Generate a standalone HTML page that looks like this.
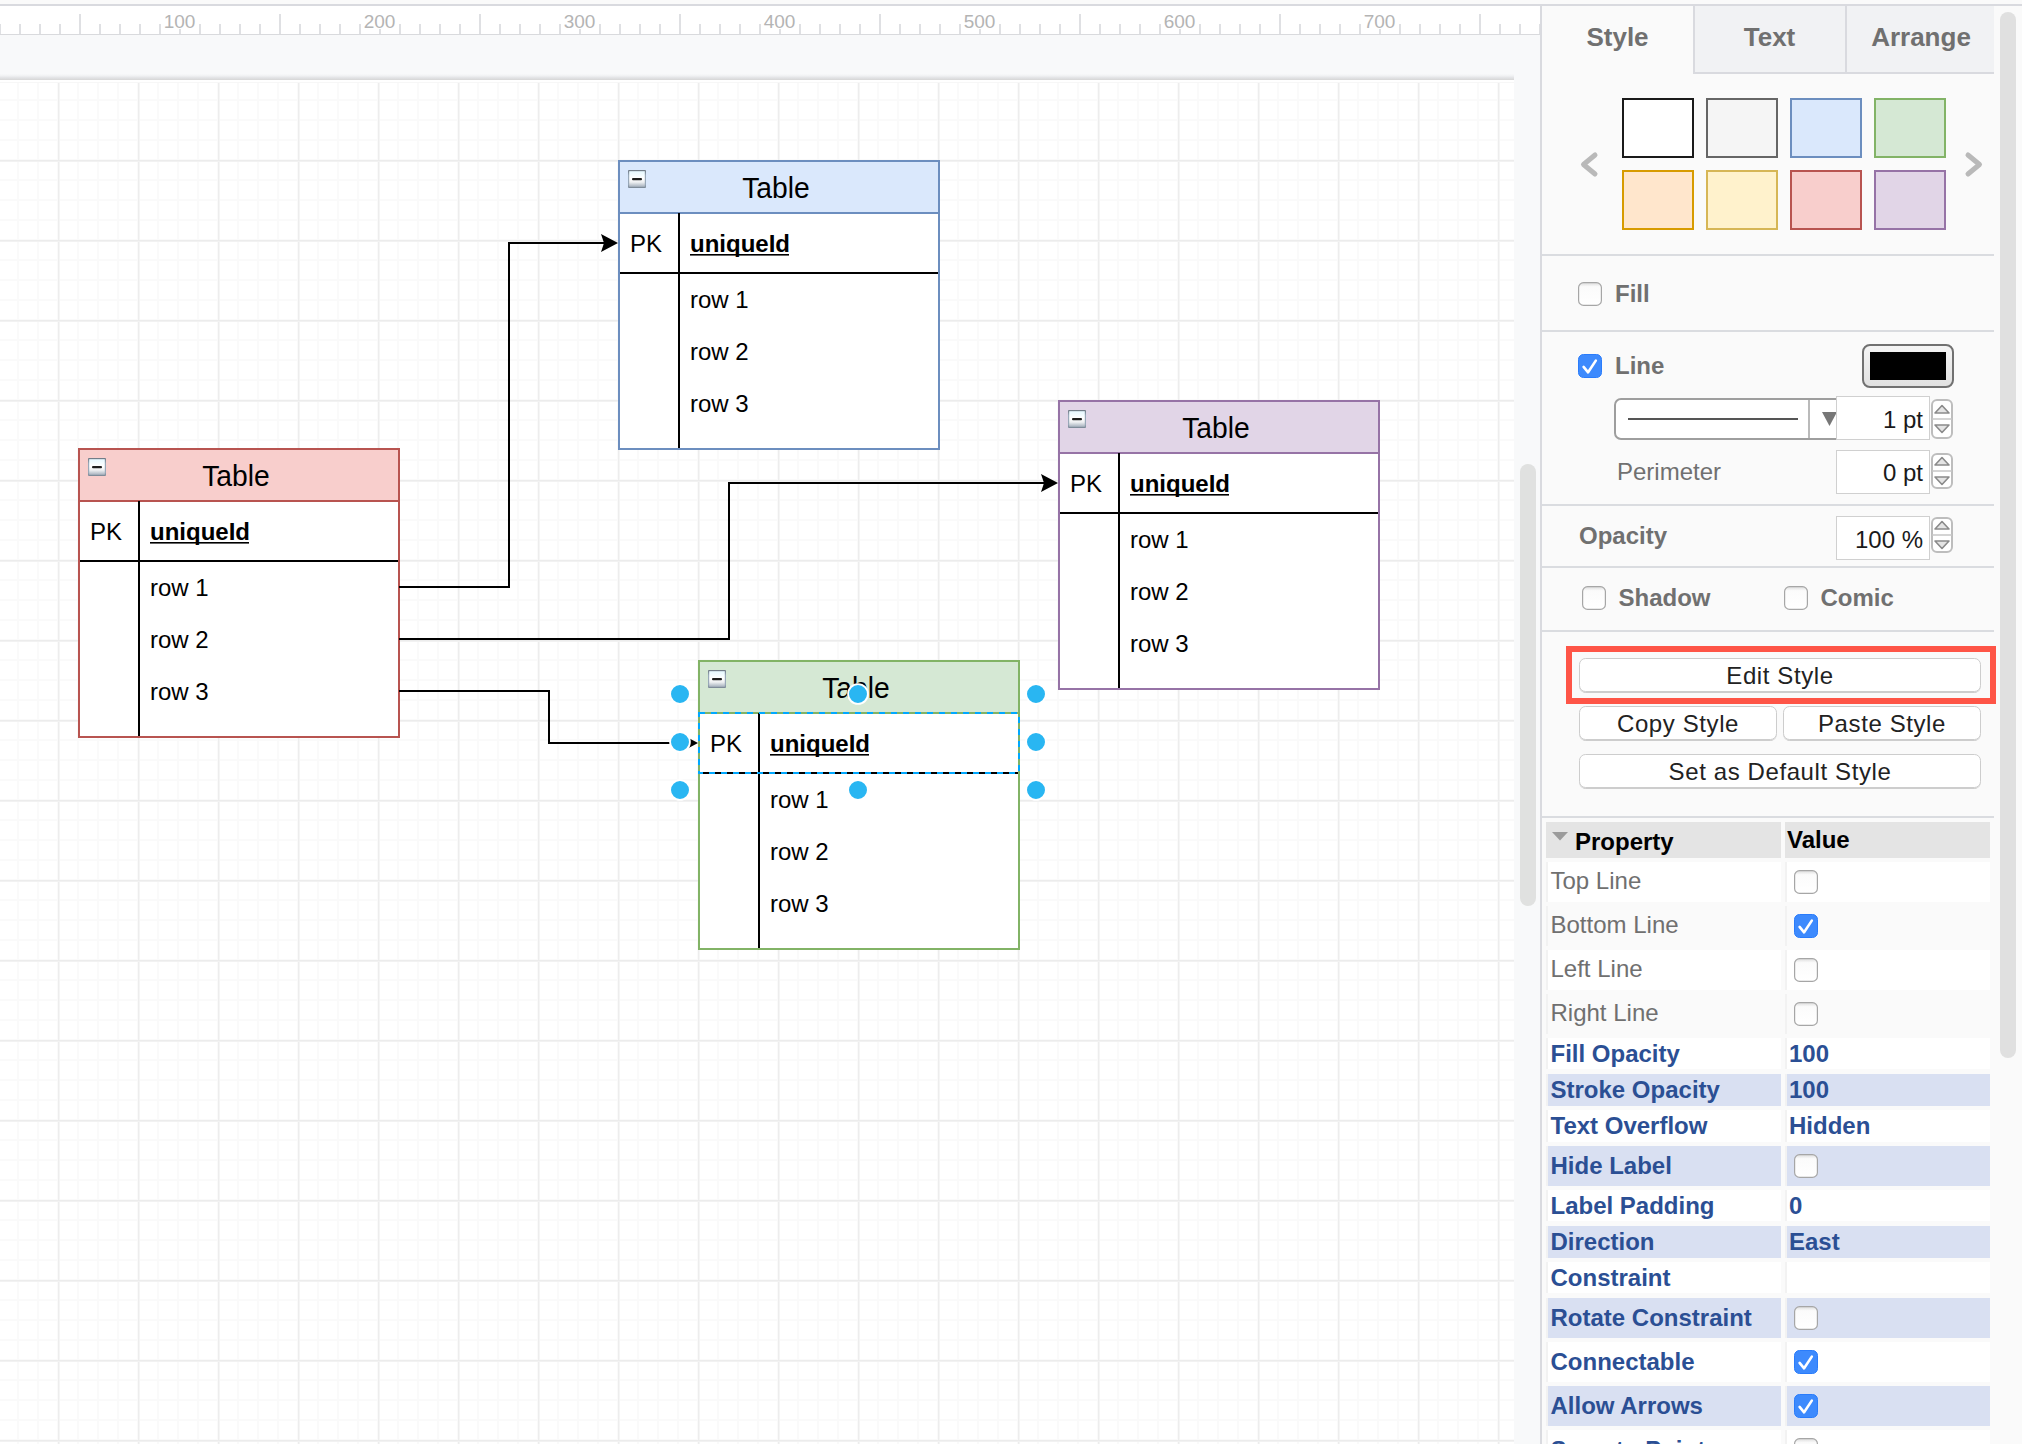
<!DOCTYPE html>
<html><head><meta charset="utf-8"><title>draw.io</title>
<style>
html,body{margin:0;padding:0;width:2022px;height:1444px;overflow:hidden;background:#fafafa;}
svg{display:block;font-family:"Liberation Sans",sans-serif;}
</style></head><body>
<svg width="2022" height="1444" viewBox="0 0 2022 1444">
<rect x="0" y="0" width="2022" height="6" fill="#fafafa"/>
<defs><pattern id="gmin" x="17" y="79" width="20" height="20" patternUnits="userSpaceOnUse"><rect x="0" y="0" width="2" height="20" fill="#fafafa"/><rect x="0" y="0" width="20" height="2" fill="#fafafa"/></pattern><pattern id="gmaj" x="58" y="80" width="80" height="80" patternUnits="userSpaceOnUse"><rect x="0" y="0" width="1" height="80" fill="#ededed"/><rect x="1" y="0" width="1" height="80" fill="#f5f5f5"/><rect x="0" y="0" width="80" height="1" fill="#ececec"/><rect x="0" y="1" width="80" height="1" fill="#f2f2f2"/></pattern><linearGradient id="shd" x1="0" y1="0" x2="0" y2="1"><stop offset="0" stop-color="#f8f9fa" stop-opacity="0"/><stop offset="0.6" stop-color="#e6e7e9"/><stop offset="1" stop-color="#d6d6d6"/></linearGradient></defs>
<rect x="0" y="35" width="1540" height="1409" fill="#f8f9fa"/>
<rect x="0" y="80" width="1514" height="1364" fill="#ffffff"/>
<rect x="0" y="80" width="1514" height="1364" fill="url(#gmin)"/>
<rect x="0" y="80" width="1514" height="1364" fill="url(#gmaj)"/>
<rect x="0" y="80" width="1514" height="2" fill="#ffffff"/>
<rect x="0" y="82" width="1514" height="1" fill="#f7f7f7"/>
<rect x="0" y="73" width="1514" height="7" fill="url(#shd)"/>
<rect x="1520" y="464" width="16" height="442" rx="8" fill="#e0e1e0"/>
<rect x="0" y="6" width="1540" height="28" fill="#ffffff"/>
<rect x="0" y="34" width="1540" height="1" fill="#d9dadd"/>
<rect x="-1" y="24" width="2" height="10" fill="#dfe0e3"/>
<rect x="19" y="24" width="2" height="10" fill="#dfe0e3"/>
<rect x="39" y="24" width="2" height="10" fill="#dfe0e3"/>
<rect x="59" y="24" width="2" height="10" fill="#dfe0e3"/>
<rect x="79" y="14" width="2" height="20" fill="#dfe0e3"/>
<rect x="99" y="24" width="2" height="10" fill="#dfe0e3"/>
<rect x="119" y="24" width="2" height="10" fill="#dfe0e3"/>
<rect x="139" y="24" width="2" height="10" fill="#dfe0e3"/>
<rect x="159" y="24" width="2" height="10" fill="#dfe0e3"/>
<rect x="179" y="29" width="2" height="5" fill="#dfe0e3"/>
<rect x="199" y="24" width="2" height="10" fill="#dfe0e3"/>
<rect x="219" y="24" width="2" height="10" fill="#dfe0e3"/>
<rect x="239" y="24" width="2" height="10" fill="#dfe0e3"/>
<rect x="259" y="24" width="2" height="10" fill="#dfe0e3"/>
<rect x="279" y="14" width="2" height="20" fill="#dfe0e3"/>
<rect x="299" y="24" width="2" height="10" fill="#dfe0e3"/>
<rect x="319" y="24" width="2" height="10" fill="#dfe0e3"/>
<rect x="339" y="24" width="2" height="10" fill="#dfe0e3"/>
<rect x="359" y="24" width="2" height="10" fill="#dfe0e3"/>
<rect x="379" y="29" width="2" height="5" fill="#dfe0e3"/>
<rect x="399" y="24" width="2" height="10" fill="#dfe0e3"/>
<rect x="419" y="24" width="2" height="10" fill="#dfe0e3"/>
<rect x="439" y="24" width="2" height="10" fill="#dfe0e3"/>
<rect x="459" y="24" width="2" height="10" fill="#dfe0e3"/>
<rect x="479" y="14" width="2" height="20" fill="#dfe0e3"/>
<rect x="499" y="24" width="2" height="10" fill="#dfe0e3"/>
<rect x="519" y="24" width="2" height="10" fill="#dfe0e3"/>
<rect x="539" y="24" width="2" height="10" fill="#dfe0e3"/>
<rect x="559" y="24" width="2" height="10" fill="#dfe0e3"/>
<rect x="579" y="29" width="2" height="5" fill="#dfe0e3"/>
<rect x="599" y="24" width="2" height="10" fill="#dfe0e3"/>
<rect x="619" y="24" width="2" height="10" fill="#dfe0e3"/>
<rect x="639" y="24" width="2" height="10" fill="#dfe0e3"/>
<rect x="659" y="24" width="2" height="10" fill="#dfe0e3"/>
<rect x="679" y="14" width="2" height="20" fill="#dfe0e3"/>
<rect x="699" y="24" width="2" height="10" fill="#dfe0e3"/>
<rect x="719" y="24" width="2" height="10" fill="#dfe0e3"/>
<rect x="739" y="24" width="2" height="10" fill="#dfe0e3"/>
<rect x="759" y="24" width="2" height="10" fill="#dfe0e3"/>
<rect x="779" y="29" width="2" height="5" fill="#dfe0e3"/>
<rect x="799" y="24" width="2" height="10" fill="#dfe0e3"/>
<rect x="819" y="24" width="2" height="10" fill="#dfe0e3"/>
<rect x="839" y="24" width="2" height="10" fill="#dfe0e3"/>
<rect x="859" y="24" width="2" height="10" fill="#dfe0e3"/>
<rect x="879" y="14" width="2" height="20" fill="#dfe0e3"/>
<rect x="899" y="24" width="2" height="10" fill="#dfe0e3"/>
<rect x="919" y="24" width="2" height="10" fill="#dfe0e3"/>
<rect x="939" y="24" width="2" height="10" fill="#dfe0e3"/>
<rect x="959" y="24" width="2" height="10" fill="#dfe0e3"/>
<rect x="979" y="29" width="2" height="5" fill="#dfe0e3"/>
<rect x="999" y="24" width="2" height="10" fill="#dfe0e3"/>
<rect x="1019" y="24" width="2" height="10" fill="#dfe0e3"/>
<rect x="1039" y="24" width="2" height="10" fill="#dfe0e3"/>
<rect x="1059" y="24" width="2" height="10" fill="#dfe0e3"/>
<rect x="1079" y="14" width="2" height="20" fill="#dfe0e3"/>
<rect x="1099" y="24" width="2" height="10" fill="#dfe0e3"/>
<rect x="1119" y="24" width="2" height="10" fill="#dfe0e3"/>
<rect x="1139" y="24" width="2" height="10" fill="#dfe0e3"/>
<rect x="1159" y="24" width="2" height="10" fill="#dfe0e3"/>
<rect x="1179" y="29" width="2" height="5" fill="#dfe0e3"/>
<rect x="1199" y="24" width="2" height="10" fill="#dfe0e3"/>
<rect x="1219" y="24" width="2" height="10" fill="#dfe0e3"/>
<rect x="1239" y="24" width="2" height="10" fill="#dfe0e3"/>
<rect x="1259" y="24" width="2" height="10" fill="#dfe0e3"/>
<rect x="1279" y="14" width="2" height="20" fill="#dfe0e3"/>
<rect x="1299" y="24" width="2" height="10" fill="#dfe0e3"/>
<rect x="1319" y="24" width="2" height="10" fill="#dfe0e3"/>
<rect x="1339" y="24" width="2" height="10" fill="#dfe0e3"/>
<rect x="1359" y="24" width="2" height="10" fill="#dfe0e3"/>
<rect x="1379" y="29" width="2" height="5" fill="#dfe0e3"/>
<rect x="1399" y="24" width="2" height="10" fill="#dfe0e3"/>
<rect x="1419" y="24" width="2" height="10" fill="#dfe0e3"/>
<rect x="1439" y="24" width="2" height="10" fill="#dfe0e3"/>
<rect x="1459" y="24" width="2" height="10" fill="#dfe0e3"/>
<rect x="1479" y="14" width="2" height="20" fill="#dfe0e3"/>
<rect x="1499" y="24" width="2" height="10" fill="#dfe0e3"/>
<rect x="1519" y="24" width="2" height="10" fill="#dfe0e3"/>
<rect x="1539" y="24" width="2" height="10" fill="#dfe0e3"/>
<text x="179.5" y="27.8" text-anchor="middle" font-size="19" fill="#b4b4b4">100</text>
<text x="379.5" y="27.8" text-anchor="middle" font-size="19" fill="#b4b4b4">200</text>
<text x="579.5" y="27.8" text-anchor="middle" font-size="19" fill="#b4b4b4">300</text>
<text x="779.5" y="27.8" text-anchor="middle" font-size="19" fill="#b4b4b4">400</text>
<text x="979.5" y="27.8" text-anchor="middle" font-size="19" fill="#b4b4b4">500</text>
<text x="1179.5" y="27.8" text-anchor="middle" font-size="19" fill="#b4b4b4">600</text>
<text x="1379.5" y="27.8" text-anchor="middle" font-size="19" fill="#b4b4b4">700</text>
<defs><linearGradient id="mig" x1="0" y1="0" x2="0" y2="1"><stop offset="0" stop-color="#e6f8ff"/><stop offset="0.45" stop-color="#ffffff"/><stop offset="0.7" stop-color="#eef0f2"/><stop offset="1" stop-color="#a7b2be"/></linearGradient><linearGradient id="mib" x1="0" y1="0" x2="0" y2="1"><stop offset="0" stop-color="#6e7883"/><stop offset="0.3" stop-color="#98a8b8"/><stop offset="0.8" stop-color="#98a8b8"/><stop offset="1" stop-color="#7a8794"/></linearGradient></defs>
<rect x="619" y="161" width="320" height="288" fill="#ffffff"/>
<rect x="619" y="161" width="320" height="52" fill="#dae8fc"/>
<rect x="619" y="213" width="320" height="0" fill="none"/>
<line x1="619" y1="213" x2="939" y2="213" stroke="#6c8ebf" stroke-width="2"/>
<line x1="619" y1="273" x2="939" y2="273" stroke="#000" stroke-width="2"/>
<line x1="679" y1="213" x2="679" y2="449" stroke="#000" stroke-width="2"/>
<rect x="619" y="161" width="320" height="288" fill="none" stroke="#6c8ebf" stroke-width="2"/>
<g transform="translate(628,170)"><rect x="0" y="0" width="18" height="18" rx="1" fill="url(#mib)"/><rect x="1.2" y="1.2" width="15.6" height="15.6" fill="url(#mig)"/><rect x="4" y="8" width="10" height="2.2" rx="1" fill="#1e1e1e"/></g>
<text x="776" y="198" text-anchor="middle" font-size="29" textLength="67.5" lengthAdjust="spacingAndGlyphs">Table</text>
<text x="630" y="252" font-size="24">PK</text>
<text x="690" y="252" font-size="24" font-weight="bold">uniqueId</text>
<rect x="690" y="254" width="99" height="1.6" fill="#000"/>
<text x="690" y="308" font-size="24">row 1</text>
<text x="690" y="360" font-size="24">row 2</text>
<text x="690" y="412" font-size="24">row 3</text>
<rect x="79" y="449" width="320" height="288" fill="#ffffff"/>
<rect x="79" y="449" width="320" height="52" fill="#f8cecc"/>
<rect x="79" y="501" width="320" height="0" fill="none"/>
<line x1="79" y1="501" x2="399" y2="501" stroke="#b85450" stroke-width="2"/>
<line x1="79" y1="561" x2="399" y2="561" stroke="#000" stroke-width="2"/>
<line x1="139" y1="501" x2="139" y2="737" stroke="#000" stroke-width="2"/>
<rect x="79" y="449" width="320" height="288" fill="none" stroke="#b85450" stroke-width="2"/>
<g transform="translate(88,458)"><rect x="0" y="0" width="18" height="18" rx="1" fill="url(#mib)"/><rect x="1.2" y="1.2" width="15.6" height="15.6" fill="url(#mig)"/><rect x="4" y="8" width="10" height="2.2" rx="1" fill="#1e1e1e"/></g>
<text x="236" y="486" text-anchor="middle" font-size="29" textLength="67.5" lengthAdjust="spacingAndGlyphs">Table</text>
<text x="90" y="540" font-size="24">PK</text>
<text x="150" y="540" font-size="24" font-weight="bold">uniqueId</text>
<rect x="150" y="542" width="99" height="1.6" fill="#000"/>
<text x="150" y="596" font-size="24">row 1</text>
<text x="150" y="648" font-size="24">row 2</text>
<text x="150" y="700" font-size="24">row 3</text>
<rect x="1059" y="401" width="320" height="288" fill="#ffffff"/>
<rect x="1059" y="401" width="320" height="52" fill="#e1d5e7"/>
<rect x="1059" y="453" width="320" height="0" fill="none"/>
<line x1="1059" y1="453" x2="1379" y2="453" stroke="#9673a6" stroke-width="2"/>
<line x1="1059" y1="513" x2="1379" y2="513" stroke="#000" stroke-width="2"/>
<line x1="1119" y1="453" x2="1119" y2="689" stroke="#000" stroke-width="2"/>
<rect x="1059" y="401" width="320" height="288" fill="none" stroke="#9673a6" stroke-width="2"/>
<g transform="translate(1068,410)"><rect x="0" y="0" width="18" height="18" rx="1" fill="url(#mib)"/><rect x="1.2" y="1.2" width="15.6" height="15.6" fill="url(#mig)"/><rect x="4" y="8" width="10" height="2.2" rx="1" fill="#1e1e1e"/></g>
<text x="1216" y="438" text-anchor="middle" font-size="29" textLength="67.5" lengthAdjust="spacingAndGlyphs">Table</text>
<text x="1070" y="492" font-size="24">PK</text>
<text x="1130" y="492" font-size="24" font-weight="bold">uniqueId</text>
<rect x="1130" y="494" width="99" height="1.6" fill="#000"/>
<text x="1130" y="548" font-size="24">row 1</text>
<text x="1130" y="600" font-size="24">row 2</text>
<text x="1130" y="652" font-size="24">row 3</text>
<rect x="699" y="661" width="320" height="288" fill="#ffffff"/>
<rect x="699" y="661" width="320" height="52" fill="#d5e8d4"/>
<rect x="699" y="713" width="320" height="0" fill="none"/>
<line x1="699" y1="713" x2="1019" y2="713" stroke="#82b366" stroke-width="2"/>
<line x1="699" y1="773" x2="1019" y2="773" stroke="#000" stroke-width="2"/>
<line x1="759" y1="713" x2="759" y2="949" stroke="#000" stroke-width="2"/>
<rect x="699" y="661" width="320" height="288" fill="none" stroke="#82b366" stroke-width="2"/>
<g transform="translate(708,670)"><rect x="0" y="0" width="18" height="18" rx="1" fill="url(#mib)"/><rect x="1.2" y="1.2" width="15.6" height="15.6" fill="url(#mig)"/><rect x="4" y="8" width="10" height="2.2" rx="1" fill="#1e1e1e"/></g>
<text x="856" y="698" text-anchor="middle" font-size="29" textLength="67.5" lengthAdjust="spacingAndGlyphs">Table</text>
<text x="710" y="752" font-size="24">PK</text>
<text x="770" y="752" font-size="24" font-weight="bold">uniqueId</text>
<rect x="770" y="754" width="99" height="1.6" fill="#000"/>
<text x="770" y="808" font-size="24">row 1</text>
<text x="770" y="860" font-size="24">row 2</text>
<text x="770" y="912" font-size="24">row 3</text>
<path d="M399,587 H509 V243 H606" fill="none" stroke="#000" stroke-width="2"/>
<path d="M618,243 L601,234 L604,243 L601,252 Z" fill="#000"/>
<path d="M399,639 H729 V483 H1046" fill="none" stroke="#000" stroke-width="2"/>
<path d="M1058,483 L1041,474 L1044,483 L1041,492 Z" fill="#000"/>
<path d="M399,691 H549 V743 H686" fill="none" stroke="#000" stroke-width="2"/>
<path d="M698,743 L681,734 L684,743 L681,752 Z" fill="#000"/>
<rect x="699" y="713" width="320" height="60" fill="none" stroke="#00a8ff" stroke-width="2" stroke-dasharray="6 6"/>
<circle cx="680" cy="694" r="9.9" fill="#29b6f2" stroke="#ffffff" stroke-width="1.8"/>
<circle cx="858" cy="694" r="9.9" fill="#29b6f2" stroke="#ffffff" stroke-width="1.8"/>
<circle cx="1036" cy="694" r="9.9" fill="#29b6f2" stroke="#ffffff" stroke-width="1.8"/>
<circle cx="680" cy="742" r="9.9" fill="#29b6f2" stroke="#ffffff" stroke-width="1.8"/>
<circle cx="1036" cy="742" r="9.9" fill="#29b6f2" stroke="#ffffff" stroke-width="1.8"/>
<circle cx="680" cy="790" r="9.9" fill="#29b6f2" stroke="#ffffff" stroke-width="1.8"/>
<circle cx="858" cy="790" r="9.9" fill="#29b6f2" stroke="#ffffff" stroke-width="1.8"/>
<circle cx="1036" cy="790" r="9.9" fill="#29b6f2" stroke="#ffffff" stroke-width="1.8"/>
<defs><linearGradient id="cbg" x1="0" y1="0" x2="0" y2="1"><stop offset="0" stop-color="#dcdcdc"/><stop offset="0.18" stop-color="#fbfbfb"/><stop offset="1" stop-color="#ffffff"/></linearGradient><linearGradient id="cbtn" x1="0" y1="0" x2="0" y2="1"><stop offset="0" stop-color="#f5f5f5"/><stop offset="1" stop-color="#e0e0e0"/></linearGradient><filter id="bsh" x="-5%" y="-20%" width="110%" height="150%"><feDropShadow dx="0" dy="1" stdDeviation="0.6" flood-color="#000" flood-opacity="0.18"/></filter></defs>
<rect x="1540" y="6" width="482" height="1438" fill="#fafafa"/>
<rect x="1540" y="6" width="2" height="1438" fill="#d9dadf"/>
<rect x="1694" y="6" width="300" height="67" fill="#f1f2f4"/>
<rect x="1693" y="6" width="2" height="68" fill="#d9dadf"/>
<rect x="1845" y="6" width="2" height="67" fill="#d9dadf"/>
<rect x="1693" y="72" width="301" height="2" fill="#d9dadf"/>
<text x="1617.5" y="46" text-anchor="middle" font-size="26" font-weight="bold" fill="#707070">Style</text>
<text x="1769.5" y="46" text-anchor="middle" font-size="26" font-weight="bold" fill="#707070">Text</text>
<text x="1921" y="46" text-anchor="middle" font-size="26" font-weight="bold" fill="#707070">Arrange</text>
<rect x="2000" y="12" width="16" height="1046" rx="8" fill="#e0e0e0"/>
<rect x="1623" y="99" width="70" height="58" fill="#ffffff" stroke="#1a1a1a" stroke-width="2"/>
<rect x="1707" y="99" width="70" height="58" fill="#f5f5f5" stroke="#666666" stroke-width="2"/>
<rect x="1791" y="99" width="70" height="58" fill="#dae8fc" stroke="#6c8ebf" stroke-width="2"/>
<rect x="1875" y="99" width="70" height="58" fill="#d5e8d4" stroke="#82b366" stroke-width="2"/>
<rect x="1623" y="171" width="70" height="58" fill="#ffe6cc" stroke="#d79b00" stroke-width="2"/>
<rect x="1707" y="171" width="70" height="58" fill="#fff2cc" stroke="#d6b656" stroke-width="2"/>
<rect x="1791" y="171" width="70" height="58" fill="#f8cecc" stroke="#b85450" stroke-width="2"/>
<rect x="1875" y="171" width="70" height="58" fill="#e1d5e7" stroke="#9673a6" stroke-width="2"/>
<path d="M1595,155 L1583.5,164.5 L1595,174" fill="none" stroke="#b9b9b9" stroke-width="5" stroke-linecap="round" stroke-linejoin="round"/>
<path d="M1968,155 L1979.5,164.5 L1968,174" fill="none" stroke="#b9b9b9" stroke-width="5" stroke-linecap="round" stroke-linejoin="round"/>
<rect x="1542" y="254" width="452" height="2" fill="#dadce0"/>
<rect x="1578.6" y="282.6" width="22.8" height="22.8" rx="5" fill="url(#cbg)" stroke="#a6a6a6" stroke-width="1.2"/>
<text x="1615" y="302" font-size="24" font-weight="bold" fill="#707070">Fill</text>
<rect x="1542" y="330" width="452" height="2" fill="#dadce0"/>
<rect x="1578.5" y="354.5" width="23" height="23" rx="5" fill="#3d8afd" stroke="#2a7cfb" stroke-width="1"/><path d="M1583.6,366.9 L1588.1,372.3 L1595.8,360.6" fill="none" stroke="#fff" stroke-width="2.6" stroke-linecap="round" stroke-linejoin="round"/>
<text x="1615" y="374" font-size="24" font-weight="bold" fill="#707070">Line</text>
<rect x="1863" y="345" width="90" height="42" rx="7" fill="url(#cbtn)" stroke="#717171" stroke-width="2"/>
<rect x="1870" y="352" width="76" height="28" fill="#000"/>
<rect x="1615" y="399" width="240" height="40" rx="6" fill="#ffffff" stroke="#9e9e9e" stroke-width="2"/>
<rect x="1628" y="418" width="170" height="2" fill="#555555"/>
<rect x="1808" y="400" width="2" height="38" fill="#bababa"/>
<path d="M1822,412 L1837,412 L1829.5,426 Z" fill="#777"/>
<rect x="1836.5" y="396.5" width="93" height="43" fill="#ffffff" stroke="#d0d0d0" stroke-width="1"/><text x="1923" y="427.5" text-anchor="end" font-size="24" fill="#1a1a1a">1 pt</text>
<rect x="1932" y="400" width="20" height="38" rx="5" fill="#ffffff" stroke="#bdbdbd" stroke-width="2"/><rect x="1932" y="418.25" width="20" height="1.5" fill="#c6c6c6"/><path d="M1935,413.0 L1942,405.5 L1949,413.0 Z" fill="#e4e4e4" stroke="#8a8a8a" stroke-width="1.6" stroke-linejoin="round"/><path d="M1935,425.0 L1942,432.5 L1949,425.0 Z" fill="#e4e4e4" stroke="#8a8a8a" stroke-width="1.6" stroke-linejoin="round"/>
<text x="1617" y="480" font-size="24" fill="#707070">Perimeter</text>
<rect x="1836.5" y="450.5" width="93" height="43" fill="#ffffff" stroke="#d0d0d0" stroke-width="1"/><text x="1923" y="481" text-anchor="end" font-size="24" fill="#1a1a1a">0 pt</text>
<rect x="1932" y="454" width="20" height="34" rx="5" fill="#ffffff" stroke="#bdbdbd" stroke-width="2"/><rect x="1932" y="470.25" width="20" height="1.5" fill="#c6c6c6"/><path d="M1935,465.0 L1942,457.5 L1949,465.0 Z" fill="#e4e4e4" stroke="#8a8a8a" stroke-width="1.6" stroke-linejoin="round"/><path d="M1935,477.0 L1942,484.5 L1949,477.0 Z" fill="#e4e4e4" stroke="#8a8a8a" stroke-width="1.6" stroke-linejoin="round"/>
<rect x="1542" y="504" width="452" height="2" fill="#dadce0"/>
<text x="1579" y="544" font-size="24" font-weight="bold" fill="#707070">Opacity</text>
<rect x="1836.5" y="516.5" width="93" height="43" fill="#ffffff" stroke="#d0d0d0" stroke-width="1"/><text x="1923" y="547.5" text-anchor="end" font-size="24" fill="#1a1a1a">100 %</text>
<rect x="1932" y="518" width="20" height="34" rx="5" fill="#ffffff" stroke="#bdbdbd" stroke-width="2"/><rect x="1932" y="534.25" width="20" height="1.5" fill="#c6c6c6"/><path d="M1935,529.0 L1942,521.5 L1949,529.0 Z" fill="#e4e4e4" stroke="#8a8a8a" stroke-width="1.6" stroke-linejoin="round"/><path d="M1935,541.0 L1942,548.5 L1949,541.0 Z" fill="#e4e4e4" stroke="#8a8a8a" stroke-width="1.6" stroke-linejoin="round"/>
<rect x="1542" y="566" width="452" height="2" fill="#dadce0"/>
<rect x="1582.6" y="586.6" width="22.8" height="22.8" rx="5" fill="url(#cbg)" stroke="#a6a6a6" stroke-width="1.2"/>
<text x="1618.5" y="605.5" font-size="24" font-weight="bold" fill="#707070">Shadow</text>
<rect x="1784.6" y="586.6" width="22.8" height="22.8" rx="5" fill="url(#cbg)" stroke="#a6a6a6" stroke-width="1.2"/>
<text x="1820.5" y="605.5" font-size="24" font-weight="bold" fill="#707070">Comic</text>
<rect x="1542" y="630" width="452" height="2" fill="#dadce0"/>
<rect x="1579.5" y="658.5" width="401" height="33" rx="6" fill="#ffffff" stroke="#cdcdcd" stroke-width="1" filter="url(#bsh)"/><text x="1780.0" y="684" text-anchor="middle" font-size="24" letter-spacing="0.6" fill="#222222">Edit Style</text>
<rect x="1569" y="649" width="424" height="52" fill="none" stroke="#fe5547" stroke-width="6"/>
<rect x="1579.5" y="706.5" width="197" height="33" rx="6" fill="#ffffff" stroke="#cdcdcd" stroke-width="1" filter="url(#bsh)"/><text x="1678.0" y="732" text-anchor="middle" font-size="24" letter-spacing="0.6" fill="#222222">Copy Style</text>
<rect x="1783.5" y="706.5" width="197" height="33" rx="6" fill="#ffffff" stroke="#cdcdcd" stroke-width="1" filter="url(#bsh)"/><text x="1882.0" y="732" text-anchor="middle" font-size="24" letter-spacing="0.6" fill="#222222">Paste Style</text>
<rect x="1579.5" y="754.5" width="401" height="33" rx="6" fill="#ffffff" stroke="#cdcdcd" stroke-width="1" filter="url(#bsh)"/><text x="1780.0" y="780" text-anchor="middle" font-size="24" letter-spacing="0.6" fill="#222222">Set as Default Style</text>
<rect x="1542" y="816" width="452" height="2" fill="#dadce0"/>
<rect x="1546" y="822" width="235" height="36" fill="#e4e4e4"/>
<rect x="1785" y="822" width="205" height="36" fill="#e4e4e4"/>
<path d="M1552,832 L1568,832 L1560,840.5 Z" fill="#9b9b9b"/>
<text x="1575" y="850" font-size="24" font-weight="bold" fill="#000">Property</text>
<text x="1787" y="848" font-size="24" font-weight="bold" fill="#000">Value</text>
<rect x="1546" y="862" width="2" height="40" fill="#f2f2f2"/>
<rect x="1548" y="862" width="233" height="40" fill="#ffffff"/>
<rect x="1785" y="862" width="2" height="40" fill="#f2f2f2"/>
<rect x="1787" y="862" width="203" height="40" fill="#ffffff"/>
<text x="1550.5" y="889" font-size="24" fill="#707070">Top Line</text>
<rect x="1794.6" y="870.6" width="22.8" height="22.8" rx="5" fill="url(#cbg)" stroke="#a6a6a6" stroke-width="1.2"/>
<rect x="1546" y="906" width="2" height="40" fill="#f2f2f2"/>
<rect x="1548" y="906" width="233" height="40" fill="#fafafa"/>
<rect x="1785" y="906" width="2" height="40" fill="#f2f2f2"/>
<rect x="1787" y="906" width="203" height="40" fill="#fafafa"/>
<text x="1550.5" y="933" font-size="24" fill="#707070">Bottom Line</text>
<rect x="1794.5" y="914.5" width="23" height="23" rx="5" fill="#3d8afd" stroke="#2a7cfb" stroke-width="1"/><path d="M1799.6,926.9 L1804.1,932.3 L1811.8,920.6" fill="none" stroke="#fff" stroke-width="2.6" stroke-linecap="round" stroke-linejoin="round"/>
<rect x="1546" y="950" width="2" height="40" fill="#f2f2f2"/>
<rect x="1548" y="950" width="233" height="40" fill="#ffffff"/>
<rect x="1785" y="950" width="2" height="40" fill="#f2f2f2"/>
<rect x="1787" y="950" width="203" height="40" fill="#ffffff"/>
<text x="1550.5" y="977" font-size="24" fill="#707070">Left Line</text>
<rect x="1794.6" y="958.6" width="22.8" height="22.8" rx="5" fill="url(#cbg)" stroke="#a6a6a6" stroke-width="1.2"/>
<rect x="1546" y="994" width="2" height="40" fill="#f2f2f2"/>
<rect x="1548" y="994" width="233" height="40" fill="#fafafa"/>
<rect x="1785" y="994" width="2" height="40" fill="#f2f2f2"/>
<rect x="1787" y="994" width="203" height="40" fill="#fafafa"/>
<text x="1550.5" y="1021" font-size="24" fill="#707070">Right Line</text>
<rect x="1794.6" y="1002.6" width="22.8" height="22.8" rx="5" fill="url(#cbg)" stroke="#a6a6a6" stroke-width="1.2"/>
<rect x="1546" y="1038" width="2" height="31" fill="#f2f2f2"/>
<rect x="1548" y="1038" width="233" height="31" fill="#ffffff"/>
<rect x="1785" y="1038" width="2" height="31" fill="#f2f2f2"/>
<rect x="1787" y="1038" width="203" height="31" fill="#ffffff"/>
<text x="1550.5" y="1061.5" font-size="24" font-weight="bold" fill="#2b4f94">Fill Opacity</text>
<text x="1789" y="1061.5" font-size="24" font-weight="bold" fill="#2b4f94">100</text>
<rect x="1546" y="1074" width="2" height="32" fill="#f2f2f2"/>
<rect x="1548" y="1074" width="233" height="32" fill="#d9e0f2"/>
<rect x="1785" y="1074" width="2" height="32" fill="#f2f2f2"/>
<rect x="1787" y="1074" width="203" height="32" fill="#d9e0f2"/>
<text x="1550.5" y="1098" font-size="24" font-weight="bold" fill="#2b4f94">Stroke Opacity</text>
<text x="1789" y="1098" font-size="24" font-weight="bold" fill="#2b4f94">100</text>
<rect x="1546" y="1110" width="2" height="32" fill="#f2f2f2"/>
<rect x="1548" y="1110" width="233" height="32" fill="#ffffff"/>
<rect x="1785" y="1110" width="2" height="32" fill="#f2f2f2"/>
<rect x="1787" y="1110" width="203" height="32" fill="#ffffff"/>
<text x="1550.5" y="1133.5" font-size="24" font-weight="bold" fill="#2b4f94">Text Overflow</text>
<text x="1789" y="1133.5" font-size="24" font-weight="bold" fill="#2b4f94">Hidden</text>
<rect x="1546" y="1146" width="2" height="40" fill="#f2f2f2"/>
<rect x="1548" y="1146" width="233" height="40" fill="#d9e0f2"/>
<rect x="1785" y="1146" width="2" height="40" fill="#f2f2f2"/>
<rect x="1787" y="1146" width="203" height="40" fill="#d9e0f2"/>
<text x="1550.5" y="1173.5" font-size="24" font-weight="bold" fill="#2b4f94">Hide Label</text>
<rect x="1794.6" y="1154.6" width="22.8" height="22.8" rx="5" fill="url(#cbg)" stroke="#a6a6a6" stroke-width="1.2"/>
<rect x="1546" y="1190" width="2" height="31" fill="#f2f2f2"/>
<rect x="1548" y="1190" width="233" height="31" fill="#ffffff"/>
<rect x="1785" y="1190" width="2" height="31" fill="#f2f2f2"/>
<rect x="1787" y="1190" width="203" height="31" fill="#ffffff"/>
<text x="1550.5" y="1213.5" font-size="24" font-weight="bold" fill="#2b4f94">Label Padding</text>
<text x="1789" y="1213.5" font-size="24" font-weight="bold" fill="#2b4f94">0</text>
<rect x="1546" y="1226" width="2" height="32" fill="#f2f2f2"/>
<rect x="1548" y="1226" width="233" height="32" fill="#d9e0f2"/>
<rect x="1785" y="1226" width="2" height="32" fill="#f2f2f2"/>
<rect x="1787" y="1226" width="203" height="32" fill="#d9e0f2"/>
<text x="1550.5" y="1250" font-size="24" font-weight="bold" fill="#2b4f94">Direction</text>
<text x="1789" y="1250" font-size="24" font-weight="bold" fill="#2b4f94">East</text>
<rect x="1546" y="1262" width="2" height="31" fill="#f2f2f2"/>
<rect x="1548" y="1262" width="233" height="31" fill="#ffffff"/>
<rect x="1785" y="1262" width="2" height="31" fill="#f2f2f2"/>
<rect x="1787" y="1262" width="203" height="31" fill="#ffffff"/>
<text x="1550.5" y="1285.5" font-size="24" font-weight="bold" fill="#2b4f94">Constraint</text>
<rect x="1546" y="1298" width="2" height="40" fill="#f2f2f2"/>
<rect x="1548" y="1298" width="233" height="40" fill="#d9e0f2"/>
<rect x="1785" y="1298" width="2" height="40" fill="#f2f2f2"/>
<rect x="1787" y="1298" width="203" height="40" fill="#d9e0f2"/>
<text x="1550.5" y="1325.5" font-size="24" font-weight="bold" fill="#2b4f94">Rotate Constraint</text>
<rect x="1794.6" y="1306.6" width="22.8" height="22.8" rx="5" fill="url(#cbg)" stroke="#a6a6a6" stroke-width="1.2"/>
<rect x="1546" y="1342" width="2" height="40" fill="#f2f2f2"/>
<rect x="1548" y="1342" width="233" height="40" fill="#ffffff"/>
<rect x="1785" y="1342" width="2" height="40" fill="#f2f2f2"/>
<rect x="1787" y="1342" width="203" height="40" fill="#ffffff"/>
<text x="1550.5" y="1369.5" font-size="24" font-weight="bold" fill="#2b4f94">Connectable</text>
<rect x="1794.5" y="1350.5" width="23" height="23" rx="5" fill="#3d8afd" stroke="#2a7cfb" stroke-width="1"/><path d="M1799.6,1362.9 L1804.1,1368.3 L1811.8,1356.6" fill="none" stroke="#fff" stroke-width="2.6" stroke-linecap="round" stroke-linejoin="round"/>
<rect x="1546" y="1386" width="2" height="40" fill="#f2f2f2"/>
<rect x="1548" y="1386" width="233" height="40" fill="#d9e0f2"/>
<rect x="1785" y="1386" width="2" height="40" fill="#f2f2f2"/>
<rect x="1787" y="1386" width="203" height="40" fill="#d9e0f2"/>
<text x="1550.5" y="1413.5" font-size="24" font-weight="bold" fill="#2b4f94">Allow Arrows</text>
<rect x="1794.5" y="1394.5" width="23" height="23" rx="5" fill="#3d8afd" stroke="#2a7cfb" stroke-width="1"/><path d="M1799.6,1406.9 L1804.1,1412.3 L1811.8,1400.6" fill="none" stroke="#fff" stroke-width="2.6" stroke-linecap="round" stroke-linejoin="round"/>
<rect x="1546" y="1430" width="2" height="40" fill="#f2f2f2"/>
<rect x="1548" y="1430" width="233" height="40" fill="#ffffff"/>
<rect x="1785" y="1430" width="2" height="40" fill="#f2f2f2"/>
<rect x="1787" y="1430" width="203" height="40" fill="#ffffff"/>
<text x="1550.5" y="1457.5" font-size="24" font-weight="bold" fill="#2b4f94">Snap to Point</text>
<rect x="1794.6" y="1438.6" width="22.8" height="22.8" rx="5" fill="url(#cbg)" stroke="#a6a6a6" stroke-width="1.2"/>
<rect x="0" y="4" width="2022" height="2" fill="#d9dadf"/>
</svg>
</body></html>
